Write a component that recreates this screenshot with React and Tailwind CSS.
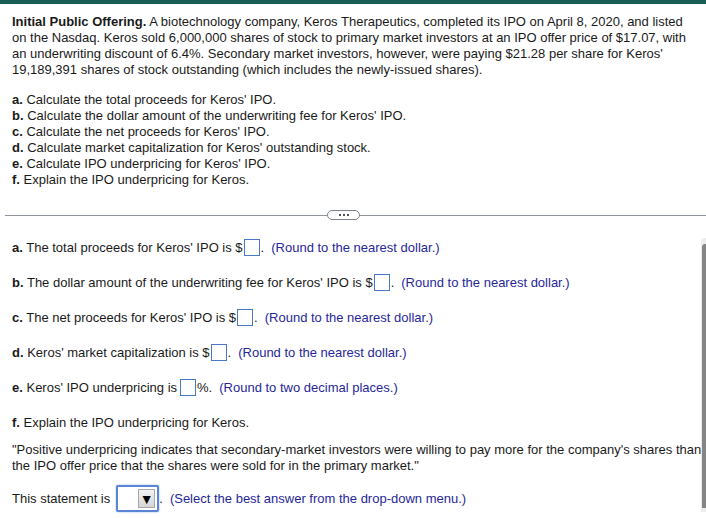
import React from "react";

function Box({ w = "w-[16px]" }) {
  return <span className={`inline-block ${w} h-[17px] border border-[#4a78c8] bg-white align-middle mx-[1px]`} />;
}

function Hint({ children }) {
  return <span className="text-[#27279a] ml-[7px]">{children}</span>;
}

export default function App() {
  const tasks = [
    ["a.", "Calculate the total proceeds for Keros' IPO."],
    ["b.", "Calculate the dollar amount of the underwriting fee for Keros' IPO."],
    ["c.", "Calculate the net proceeds for Keros' IPO."],
    ["d.", "Calculate market capitalization for Keros' outstanding stock."],
    ["e.", "Calculate IPO underpricing for Keros' IPO."],
    ["f.", "Explain the IPO underpricing for Keros."],
  ];

  return (
    <div className="w-[706px] h-[518px] overflow-hidden bg-white text-[#1a1a1a] text-[13px] leading-[16px] relative" style={{ fontFamily: '"Liberation Sans", Arial, sans-serif' }}>
      <div className="h-[4px] bg-[#1b5c55]" />

      {/* Question text */}
      <div className="px-[12px] pt-[10px]">
        <p>
          <b>Initial Public Offering.</b> A biotechnology company, Keros Therapeutics, completed its IPO on April 8, 2020, and listed on the Nasdaq. Keros sold 6,000,000 shares of stock to primary market investors at an IPO offer price of $17.07, with an underwriting discount of 6.4%. Secondary market investors, however, were paying $21.28 per share for Keros' 19,189,391 shares of stock outstanding (which includes the newly-issued shares).
        </p>
        <div className="mt-[14px]">
          {tasks.map(([k, t]) => (
            <div key={k}>
              <b>{k}</b> {t}
            </div>
          ))}
        </div>
      </div>

      {/* Divider */}
      <div className="flex items-center mt-[22px] pl-[5px]">
        <div className="h-px bg-[#8f959c] flex-1" />
        <div className="w-[33px] h-[10px] border border-[#7c838b] rounded-full bg-white flex items-center justify-center gap-[2px]">
          <span className="w-[2px] h-[2px] bg-[#555]" />
          <span className="w-[2px] h-[2px] bg-[#555]" />
          <span className="w-[2px] h-[2px] bg-[#555]" />
        </div>
        <div className="h-px bg-[#8f959c] w-[346px]" />
      </div>

      {/* Answers */}
      <div className="flex">
        <div className="flex-1 pl-[12px] pt-[19px] flex flex-col gap-[18px]">
          <div className="h-[17px] flex items-center">
            <span><b>a.</b> The total proceeds for Keros' IPO is $</span><Box /><span>.</span>
            <Hint>(Round to the nearest dollar.)</Hint>
          </div>
          <div className="h-[17px] flex items-center">
            <span><b>b.</b> The dollar amount of the underwriting fee for Keros' IPO is $</span><Box /><span>.</span>
            <Hint>(Round to the nearest dollar.)</Hint>
          </div>
          <div className="h-[17px] flex items-center">
            <span><b>c.</b> The net proceeds for Keros' IPO is $</span><Box /><span>.</span>
            <Hint>(Round to the nearest dollar.)</Hint>
          </div>
          <div className="h-[17px] flex items-center">
            <span><b>d.</b> Keros' market capitalization is $</span><Box /><span>.</span>
            <Hint>(Round to the nearest dollar.)</Hint>
          </div>
          <div className="h-[17px] flex items-center">
            <span className="mr-[2px]"><b>e.</b> Keros' IPO underpricing is</span><Box /><span>%.</span>
            <Hint>(Round to two decimal places.)</Hint>
          </div>
          <div className="h-[17px] flex items-center">
            <span><b>f.</b> Explain the IPO underpricing for Keros.</span>
          </div>
          <p className="-mt-[7px] whitespace-nowrap">
            "Positive underpricing indicates that secondary-market investors were willing to pay more for the company's shares than
            <br />
            the IPO offer price that the shares were sold for in the primary market."
          </p>
          <div className="flex items-center -mt-[7px]">
            <span className="mr-[6px]">This statement is</span>
            <span className="w-[43px] h-[27px] border-2 border-[#5b86d6] rounded-[2px] bg-white flex justify-end items-stretch p-[2px] shadow-[0_0_2px_#8fb0ea]">
              <span className="w-[17px] bg-gradient-to-b from-[#f2f2f2] to-[#d6d6d6] border border-[#a8a8a8] flex items-center justify-center text-[14px] leading-none text-black">▼</span>
            </span>
            <span>.</span>
            <Hint>(Select the best answer from the drop-down menu.)</Hint>
          </div>
        </div>
        {/* Scrollbar */}
        <div className="w-[6px] mt-[18px] h-[274px] bg-[#ededed] rounded-tl-[4px] pl-[1px] pt-[6px] pb-[4px]">
          <div className="h-full bg-[#858585] rounded-tl-[3px]" />
        </div>
      </div>
    </div>
  );
}
